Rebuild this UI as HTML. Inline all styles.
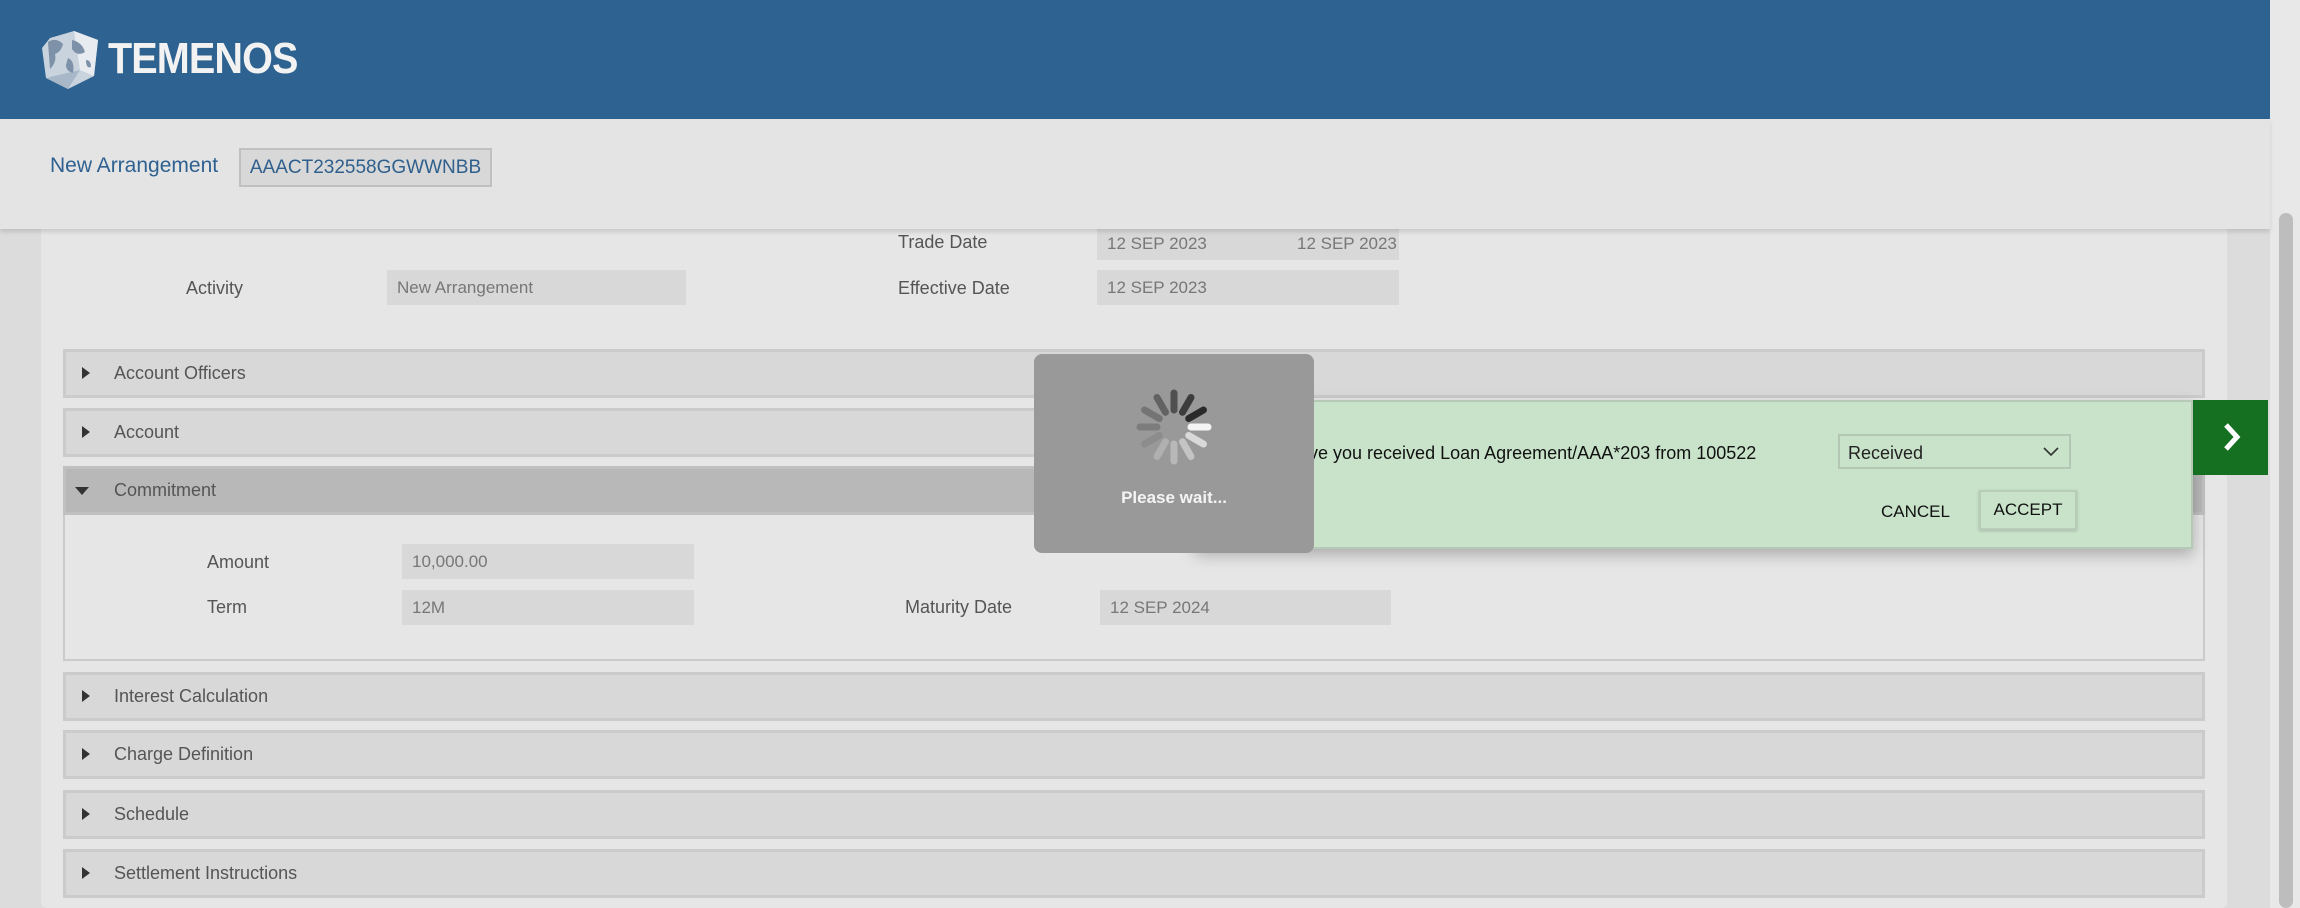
<!DOCTYPE html>
<html><head><meta charset="utf-8"><style>
*{box-sizing:border-box;margin:0;padding:0}
body{width:2300px;height:908px;overflow:hidden;background:#dcdcdc;font-family:"Liberation Sans",Arial,sans-serif;position:relative}
.abs{position:absolute;white-space:nowrap}
.hdr{left:0;top:0;width:2270px;height:119px;background:#2e6290}
.sub{left:0;top:119px;width:2270px;height:110px;background:#e4e4e4;box-shadow:0 3px 4px rgba(0,0,0,.12);z-index:2}
.panel{left:41px;top:229px;width:2186px;height:679px;background:#e6e6e6;border-radius:0 0 6px 6px}
.lbl{font-size:18px;color:#555}
.fld{background:#d8d8d8;font-size:17px;color:#777;padding-left:10px;display:flex;align-items:center}
.sec{left:63px;width:2142px;height:49px;background:#d8d8d8;border:3px solid #cbcbcb;font-size:18px;color:#555;padding-left:48px;display:flex;align-items:center}
.sec.cl:before{content:"";position:absolute;left:16px;top:15px;border-left:8px solid #333;border-top:6px solid transparent;border-bottom:6px solid transparent}
.sb{left:2270px;top:0;width:30px;height:908px;background:#e8e8e8}
.thumb{left:2279px;top:213px;width:14px;height:695px;background:#bdbdbd;border-radius:7px}
</style></head><body>
<div class="abs hdr"></div>
<svg class="abs" style="left:40px;top:30px" width="60" height="60" viewBox="0 0 60 60">
<polygon points="10,8 34,1 58,10 54,46 28,59 6,48 2,18" fill="#c9d3de"/>
<polygon points="34,1 58,10 54,46 40,40" fill="#e8ecf0"/>
<polygon points="6,48 28,59 40,40" fill="#a8b8c9"/>
<path d="M8,12 q8,-5 15,2 q-2,8 -8,10 q2,8 -5,15z M32,10 q10,2 13,12 q-8,5 -13,-3z M28,28 q7,3 5,15 q-7,-2 -7,-8z M46,30 q5,0 5,7 q-5,2 -5,-7z" fill="#7d92a8"/>
</svg>
<div class="abs" style="left:108px;top:34px;font-size:44px;font-weight:bold;color:#f2f2f2;letter-spacing:-1px;transform:scaleX(.9);transform-origin:left">TEMENOS</div>
<div class="abs sub">
 <div class="abs" style="left:50px;top:35px;font-size:21px;color:#2f6190">New Arrangement</div>
 <div class="abs" style="left:239px;top:29px;width:253px;height:39px;border:2px solid #c0c0c0;background:#d8d8d8;font-size:19px;color:#2f5f8c;display:flex;align-items:center;justify-content:center">AAACT232558GGWWNBB</div>
</div>
<div class="abs panel"></div>
<div class="abs lbl" style="left:898px;top:232px">Trade Date</div>
<div class="abs fld" style="left:1097px;top:227px;width:302px;height:33px">12 SEP 2023<span style="position:absolute;left:200px">12 SEP 2023</span></div>
<div class="abs lbl" style="left:186px;top:278px">Activity</div>
<div class="abs fld" style="left:387px;top:270px;width:299px;height:35px">New Arrangement</div>
<div class="abs lbl" style="left:898px;top:278px">Effective Date</div>
<div class="abs fld" style="left:1097px;top:270px;width:302px;height:35px">12 SEP 2023</div>

<div class="abs sec cl" style="top:349px">Account Officers</div>
<div class="abs sec cl" style="top:408px">Account</div>
<div class="abs" style="left:63px;top:466px;width:2142px;height:195px;border:2px solid #cbcbcb"></div>
<div class="abs sec" style="top:466px;background:#b8b8b8;border-color:#c0c0c0">Commitment</div>
<div class="abs" style="left:75px;top:487px;border-top:8px solid #333;border-left:7px solid transparent;border-right:7px solid transparent"></div>
<div class="abs lbl" style="left:207px;top:552px">Amount</div>
<div class="abs fld" style="left:402px;top:544px;width:292px;height:35px">10,000.00</div>
<div class="abs lbl" style="left:207px;top:597px">Term</div>
<div class="abs fld" style="left:402px;top:590px;width:292px;height:35px">12M</div>
<div class="abs lbl" style="left:905px;top:597px">Maturity Date</div>
<div class="abs fld" style="left:1100px;top:590px;width:291px;height:35px">12 SEP 2024</div>

<div class="abs sec cl" style="top:672px">Interest Calculation</div>
<div class="abs sec cl" style="top:730px">Charge Definition</div>
<div class="abs sec cl" style="top:790px">Schedule</div>
<div class="abs sec cl" style="top:849px">Settlement Instructions</div>

<div class="abs" style="left:1195px;top:400px;width:998px;height:149px;background:#c9e3ca;border:2px solid #b5c9b6;box-shadow:0 6px 14px rgba(0,0,0,.25)">
 <div class="abs" style="left:89px;top:41px;font-size:18px;color:#111">Have you received Loan Agreement/AAA*203 from 100522</div>
 <div class="abs" style="left:641px;top:32px;width:233px;height:35px;border:2px solid #b3c7b4;font-size:18px;color:#222;padding:7px 8px">Received<svg style="position:absolute;right:10px;top:11px" width="16" height="10"><path d="M1,1 L8,8 L15,1" stroke="#333" stroke-width="1.6" fill="none"/></svg></div>
 <div class="abs" style="left:684px;top:100px;font-size:17px;color:#111">CANCEL</div>
 <div class="abs" style="left:782px;top:88px;width:98px;height:40px;border:2px solid #b8ccb9;box-shadow:0 1px 3px rgba(0,0,0,.2);font-size:17px;color:#111;display:flex;align-items:center;justify-content:center">ACCEPT</div>
 <div class="abs" style="left:29px;top:67px;width:26px;height:3px;background:#9aa49b"></div>
 <div class="abs" style="left:29px;top:75px;width:26px;height:3px;background:#9aa49b"></div>
</div>
<div class="abs" style="left:2193px;top:400px;width:75px;height:75px;background:#157022"><svg width="75" height="75"><path d="M33,25 L44,37 L33,49" stroke="#fff" stroke-width="5" fill="none"/></svg></div>

<div class="abs" style="left:1034px;top:354px;width:280px;height:199px;background:#999;border-radius:8px">
<svg class="abs" style="left:100px;top:33px" width="80" height="80" viewBox="-40 -40 80 80">
<g stroke-width="7" stroke-linecap="round">
<line x1="17" y1="0" x2="34" y2="0" stroke="#f4f4f4" transform="rotate(0)"/>
<line x1="17" y1="0" x2="34" y2="0" stroke="#d9d9d9" transform="rotate(30)"/>
<line x1="17" y1="0" x2="34" y2="0" stroke="#c4c4c4" transform="rotate(60)"/>
<line x1="17" y1="0" x2="34" y2="0" stroke="#b8b8b8" transform="rotate(90)"/>
<line x1="17" y1="0" x2="34" y2="0" stroke="#b0b0b0" transform="rotate(120)"/>
<line x1="17" y1="0" x2="34" y2="0" stroke="#8c8c8c" transform="rotate(150)"/>
<line x1="17" y1="0" x2="34" y2="0" stroke="#7c7c7c" transform="rotate(180)"/>
<line x1="17" y1="0" x2="34" y2="0" stroke="#747474" transform="rotate(210)"/>
<line x1="17" y1="0" x2="34" y2="0" stroke="#626262" transform="rotate(240)"/>
<line x1="17" y1="0" x2="34" y2="0" stroke="#505050" transform="rotate(270)"/>
<line x1="17" y1="0" x2="34" y2="0" stroke="#3c3c3c" transform="rotate(300)"/>
<line x1="17" y1="0" x2="34" y2="0" stroke="#2a2a2a" transform="rotate(330)"/>
</g></svg>
<div class="abs" style="left:0;width:280px;top:134px;text-align:center;font-size:17px;font-weight:bold;color:#f4f4f4">Please wait...</div>
</div>

<div class="abs sb"></div><div class="abs thumb"></div>
</body></html>
